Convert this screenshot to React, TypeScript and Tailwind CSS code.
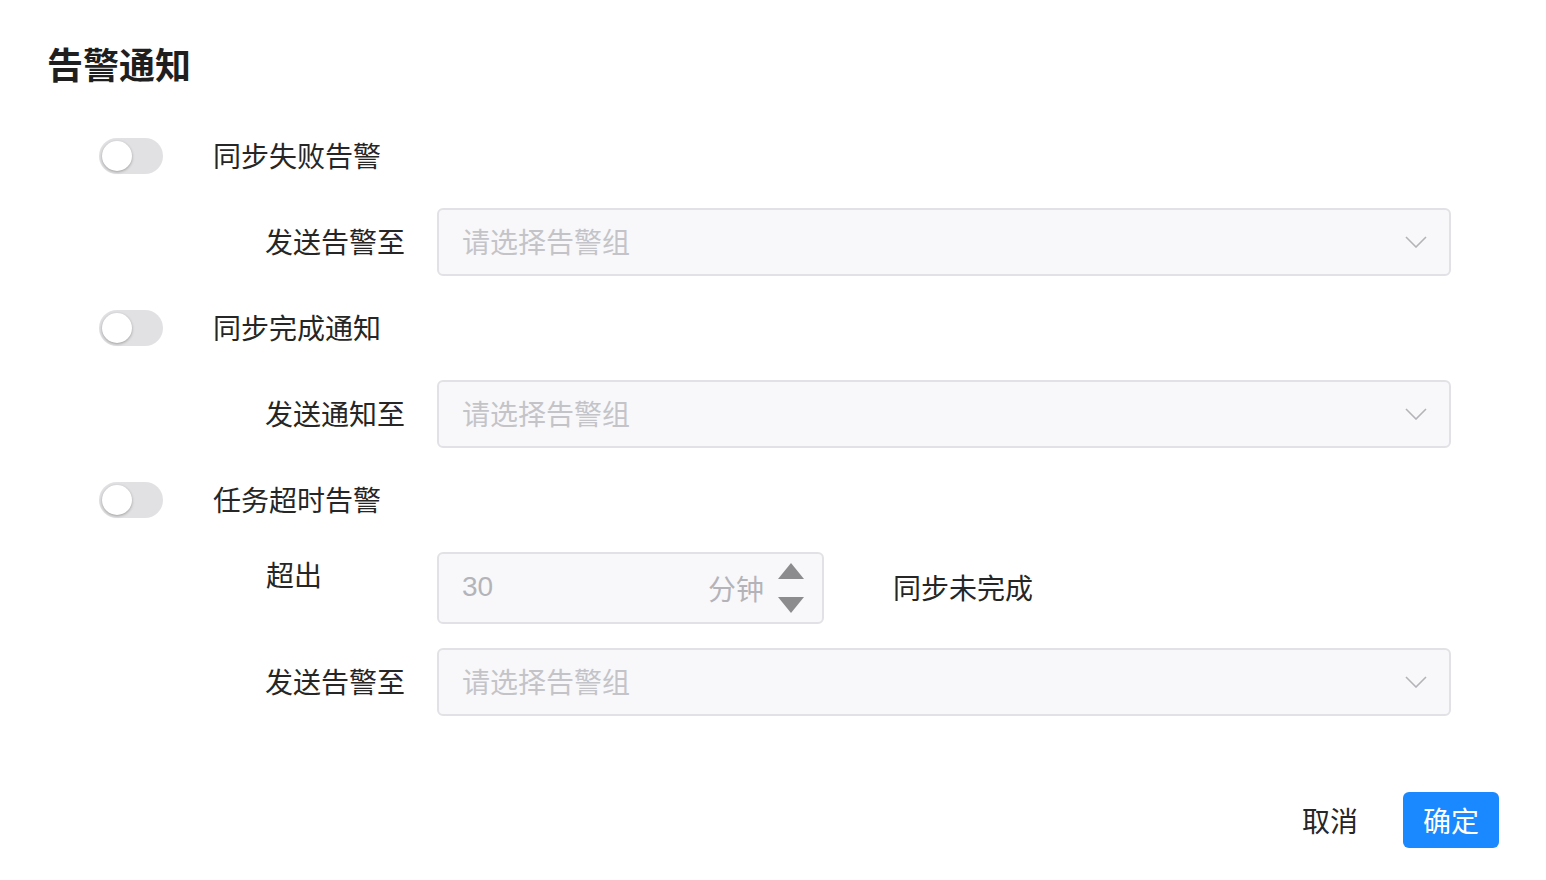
import { useState } from "react";

const font = "font-['Noto_Sans_CJK_SC','Noto_Sans',sans-serif]";

function Toggle({ on, onChange }: { on: boolean; onChange: () => void }) {
  return (
    <button
      type="button"
      onClick={onChange}
      className={`relative w-[64px] h-[36px] rounded-full shrink-0 transition-colors ${on ? "bg-[#1a88ff]" : "bg-[#e1e1e3]"}`}
    >
      <span
        className={`absolute top-[3px] w-[30px] h-[30px] rounded-full bg-white shadow-[0_1px_3px_rgba(0,0,0,0.3)] transition-all ${on ? "left-[31px]" : "left-[3px]"}`}
      />
    </button>
  );
}

function Chevron() {
  return (
    <svg width="22" height="12" viewBox="0 0 22 12" fill="none" stroke="#b4b4b8" strokeWidth="1.6">
      <path d="M1 1l10 10L21 1" />
    </svg>
  );
}

function GroupSelect() {
  return (
    <div className="w-[1014px] h-[68px] rounded-[6px] border-2 border-[#e2e2e6] bg-[#f8f8fb] flex items-center justify-between pl-[23px] pr-[22px]">
      <span className="text-[28px] leading-[40px] -mt-[2px] text-[#c4c4c8]">请选择告警组</span>
      <Chevron />
    </div>
  );
}

function ToggleRow({ label, on, onChange }: { label: string; on: boolean; onChange: () => void }) {
  return (
    <div className="flex items-center h-[36px] pl-[51px]">
      <Toggle on={on} onChange={onChange} />
      <span className="ml-[50px] text-[28px] leading-[40px] -mt-[2px] text-[#262626]">{label}</span>
    </div>
  );
}

function FieldRow({ label, children }: { label: string; children: React.ReactNode }) {
  return (
    <div className="flex items-center">
      <div className="w-[357px] text-right text-[28px] leading-[40px] -mt-[2px] text-[#262626]">{label}</div>
      <div className="ml-[32px]">{children}</div>
    </div>
  );
}

export default function App() {
  const [flags, setFlags] = useState({ fail: false, done: false, timeout: false });
  const flip = (k: keyof typeof flags) => () => setFlags((p) => ({ ...p, [k]: !p[k] }));

  return (
    <div className={`${font} w-[1546px] h-[880px] bg-white pl-[48px] pr-[47px] pt-[42px]`}>
      <h2 className="text-[36px] font-bold leading-[42px] text-[#1f1f1f] -ml-[1px]">告警通知</h2>

      <div className="mt-[54px] flex flex-col">
        <ToggleRow label="同步失败告警" on={flags.fail} onChange={flip("fail")} />
        <div className="mt-[34px]">
          <FieldRow label="发送告警至"><GroupSelect /></FieldRow>
        </div>

        <div className="mt-[34px]">
          <ToggleRow label="同步完成通知" on={flags.done} onChange={flip("done")} />
        </div>
        <div className="mt-[34px]">
          <FieldRow label="发送通知至"><GroupSelect /></FieldRow>
        </div>

        <div className="mt-[34px]">
          <ToggleRow label="任务超时告警" on={flags.timeout} onChange={flip("timeout")} />
        </div>

        <div className="mt-[34px] flex items-start">
          <div className="w-[357px] pl-[218px] text-[28px] leading-[44px] text-[#262626]">超出</div>
          <div className="ml-[32px] flex items-center">
            <div className="w-[387px] h-[72px] rounded-[6px] border-2 border-[#e2e2e6] bg-[#f8f8fb] flex items-center pl-[23px] pr-[18px]">
              <span className="text-[28px] -mt-[2px] text-[#b4b4b8] font-['Liberation_Sans',sans-serif]">30</span>
              <span className="ml-auto text-[28px] text-[#b4b4b8]">分钟</span>
              <div className="ml-[14px] flex flex-col items-center gap-[18px]">
                <svg width="26" height="16" viewBox="0 0 26 16"><path d="M13 0L26 16H0z" fill="#8c8c8f" /></svg>
                <svg width="26" height="16" viewBox="0 0 26 16"><path d="M0 0h26L13 16z" fill="#8c8c8f" /></svg>
              </div>
            </div>
            <span className="ml-[69px] text-[28px] -mt-[2px] text-[#262626]">同步未完成</span>
          </div>
        </div>

        <div className="mt-[24px]">
          <FieldRow label="发送告警至"><GroupSelect /></FieldRow>
        </div>
      </div>

      <div className="mt-[76px] flex items-center justify-end gap-[45px]">
        <button type="button" className="text-[28px] text-[#262626]">取消</button>
        <button type="button" className="w-[96px] h-[56px] rounded-[6px] bg-[#1a88ff] text-white text-[28px]">确定</button>
      </div>
    </div>
  );
}
